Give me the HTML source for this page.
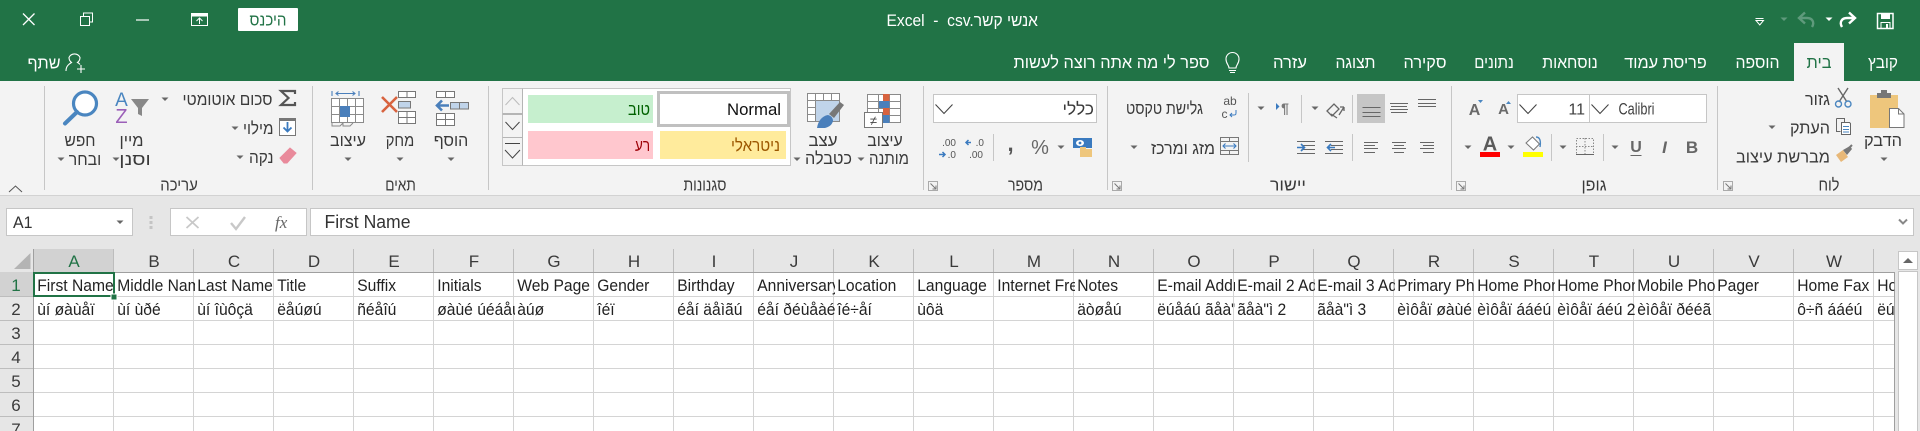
<!DOCTYPE html>
<html lang="he"><head><meta charset="utf-8"><title>Excel</title>
<style>
html,body{margin:0;padding:0;width:1920px;height:431px;overflow:hidden;background:#e6e6e6}
body{position:relative;font-family:"Liberation Sans",sans-serif}
svg{position:absolute;left:0;top:0}
text{font-family:"Liberation Sans",sans-serif;font-size:17px;fill:#3a3a3a;white-space:pre}
.w text,text.w{fill:#fff}
.m{text-anchor:middle}.e{text-anchor:end}
.c{position:absolute;width:84px;height:23px;overflow:hidden;white-space:nowrap;font-size:17px;line-height:23px;color:#222;padding-left:3.500px;transform-origin:0 0;transform:scaleX(.92)}
.r1{top:274px}.r2{top:298px}
</style></head><body>
<svg width="1920" height="431" viewBox="0 0 1920 431">
<defs>
<path id="t" d="M-3.500-1.500h7l-3.500 3.500z" fill="#666"/>
<path id="tw" d="M-3.500-1.500h7l-3.500 3.500z" fill="#fff"/>
<path id="ch" d="M-8.500-4.500L0 4.500 8.500-4.500" fill="none" stroke="#444" stroke-width="1.100"/>
<g id="la" fill="none" stroke="#777"><path d="M.5.5h9v9h-9z" stroke="#aaa"/><path d="M2.500 2.500l5 5M8 4.500v3.500H4.500"/></g>
</defs>
<!-- title bar -->
<rect width="1920" height="81" fill="#217346"/>
<rect x="1794" y="43" width="50" height="38" fill="#f3f3f3"/>
<path d="M23 13.500L34.500 25M34.500 13.500L23 25" stroke="#fff" stroke-width="1.300" fill="none"/>
<path d="M80.500 16.500h9v9h-9zM83.500 16v-3h9v9h-3" fill="none" stroke="#fff"/>
<path d="M136 20h13" stroke="#fff" stroke-width="1.200"/>
<path d="M191.500 13.500h16v12h-16z" fill="none" stroke="#fff"/><path d="M191 14h17v2.500h-17z" fill="#fff"/>
<path d="M199.500 24v-6M196.500 21l3-3 3 3" fill="none" stroke="#fff"/>
<rect x="238" y="8" width="60" height="23" rx="1" fill="#fff"/>
<text x="268" y="25.500" class="m" style="fill:#217346;font-size:16.500px" textLength="37" lengthAdjust="spacingAndGlyphs">היכנס</text>
<text x="886.500" y="26" class="w" style="font-size:16.500px" textLength="151.500" lengthAdjust="spacingAndGlyphs">Excel  -  csv.אנשי קשר</text>
<!-- QAT -->
<path d="M1877.500 13.500h15.500v15h-15.500z" fill="none" stroke="#fff" stroke-width="1.500"/><path d="M1881 13.500h9v5.500h-9z" fill="#fff"/><path d="M1881 22.500h9v6h-9z" fill="none" stroke="#fff"/><path d="M1886 24h2v4h-2z" fill="#fff"/>
<path d="M1842 27c-3-5 0-9 5-9h7M1849 12.500l6 5.500-6 5.500" fill="none" stroke="#fff" stroke-width="2.400"/>
<use href="#tw" x="1829" y="19"/>
<path d="M1812 27c3-5 0-9-5-9h-7M1805 12.500l-6 5.500 6 5.500" fill="none" stroke="#5f9a7c" stroke-width="2.400"/>
<path d="M1780.500 17.500h7l-3.500 3.500z" fill="#5f9a7c"/>
<path d="M1755.500 18.500h8M1756 20.500h7.500l-3.700 4.500z" fill="none" stroke="#fff"/>
<!-- tabs -->
<g class="w">
<text x="1883" y="68" class="m" textLength="30" lengthAdjust="spacingAndGlyphs">קובץ</text>
<text x="1757.500" y="68" class="m" textLength="44" lengthAdjust="spacingAndGlyphs">הוספה</text>
<text x="1665.500" y="68" class="m" textLength="82.500" lengthAdjust="spacingAndGlyphs">פריסת עמוד</text>
<text x="1570" y="68" class="m" textLength="55.500" lengthAdjust="spacingAndGlyphs">נוסחאות</text>
<text x="1494" y="68" class="m" textLength="39.500" lengthAdjust="spacingAndGlyphs">נתונים</text>
<text x="1425" y="68" class="m" textLength="43" lengthAdjust="spacingAndGlyphs">סקירה</text>
<text x="1355.500" y="68" class="m" textLength="40" lengthAdjust="spacingAndGlyphs">תצוגה</text>
<text x="1290" y="68" class="m" textLength="34" lengthAdjust="spacingAndGlyphs">עזרה</text>
<text x="1209.500" y="68" class="e" textLength="196" lengthAdjust="spacingAndGlyphs">ספר לי מה אתה רוצה לעשות</text>
<text x="60.500" y="68.500" class="e" textLength="33" lengthAdjust="spacingAndGlyphs">שתף</text>
</g>
<text x="1819" y="68" class="m" style="fill:#217346" textLength="25" lengthAdjust="spacingAndGlyphs">בית</text>
<path d="M1229 68c0-3-3-4-3-9a6.500 6.500 0 0 1 13 0c0 5-3 6-3 9zM1229 70.500h7M1230 72.500h5" fill="none" stroke="#fff" stroke-width="1.100"/>
<path d="M66 71c0-5 3-7 5.500-8.500-2-1.500-2.500-3-2.500-5a6 6 0 0 1 11 0c0 2-.5 3.500-2.500 5 1 .5 2 1.200 2.500 2M77 69h8M81 65v8" fill="none" stroke="#fff" stroke-width="1.100"/>
<!-- ribbon -->
<rect y="81" width="1920" height="114" fill="#f3f3f3"/>
<rect x="1794" y="79" width="50" height="3" fill="#f3f3f3"/>
<rect y="195" width="1920" height="1" fill="#d2d2d2"/>
<path d="M44.500 86v104M312.500 86v104M488.500 86v104M923.500 86v104M1107.500 86v104M1451.500 86v104M1717.500 86v104" stroke="#c6c6c6"/>
<path d="M1248.500 93v69M1301.500 95v28M1352.500 95v28M1352.500 134v27M1603.500 134v27M1551.500 134v27M993.500 134v27" stroke="#c6c6c6"/>
<path d="M9 192l6.500-6 6.500 6" fill="none" stroke="#555"/>
<!-- group labels -->
<g>
<text x="1829" y="190.500" class="m" textLength="21" lengthAdjust="spacingAndGlyphs">לוח</text><text x="1594" y="190.500" class="m" textLength="25" lengthAdjust="spacingAndGlyphs">גופן</text>
<text x="1288" y="190.500" class="m" textLength="36" lengthAdjust="spacingAndGlyphs">יישור</text><text x="1025.500" y="190.500" class="m" textLength="35" lengthAdjust="spacingAndGlyphs">מספר</text>
<text x="705" y="190.500" class="m" textLength="43" lengthAdjust="spacingAndGlyphs">סגנונות</text><text x="400.500" y="190.500" class="m" textLength="30.500" lengthAdjust="spacingAndGlyphs">תאים</text>
<text x="179" y="190.500" class="m" textLength="37.500" lengthAdjust="spacingAndGlyphs">עריכה</text>
</g>
<use href="#la" x="928" y="181"/><use href="#la" x="1112" y="181"/><use href="#la" x="1456" y="181"/><use href="#la" x="1723" y="181"/>
<!-- clipboard -->
<path d="M1870 95h28v33h-28z" fill="#eec67c"/><path d="M1877 93h14v5h-14z" fill="#777"/><path d="M1881 90h6v4h-6z" fill="#777"/>
<path d="M1889.500 108.500h9l5.500 5.500v13.500h-14.500z" fill="#fff" stroke="#777"/><path d="M1898.500 108.500v5.500h5.500" fill="none" stroke="#777"/>
<text x="1883" y="146" class="m" textLength="38" lengthAdjust="spacingAndGlyphs">הדבק</text><use href="#t" x="1884" y="159"/>
<text x="1830" y="105" class="e" textLength="25" lengthAdjust="spacingAndGlyphs">גזור</text>
<path d="M1838 88l9 14M1848 88l-9 14" stroke="#666" stroke-width="1.400"/><circle cx="1838.500" cy="104" r="3" fill="none" stroke="#4a86c0" stroke-width="1.400"/><circle cx="1848" cy="104" r="3" fill="none" stroke="#4a86c0" stroke-width="1.400"/>
<text x="1830" y="133.500" class="e" textLength="40" lengthAdjust="spacingAndGlyphs">העתק</text><use href="#t" x="1772" y="127"/>
<path d="M1836.500 118.500h8v4M1836.500 118.500v13h4" fill="none" stroke="#666"/><path d="M1841.500 122.500h8l1 1v11h-9z" fill="#fff" stroke="#666"/><path d="M1843 126.500h6M1843 129.500h6M1843 132h6" stroke="#4a86c0"/>
<text x="1830" y="162.500" class="e" textLength="94" lengthAdjust="spacingAndGlyphs">מברשת עיצוב</text>
<path d="M1836 155l7-5 5 7-7 5z" fill="#e8b878"/><path d="M1843 150l7-4 2 3-5 6z" fill="#777"/><path d="M1849 148l3-3" stroke="#777" stroke-width="2"/>
<!-- font -->
<rect x="1589.500" y="94.500" width="117" height="28" fill="#fff" stroke="#c6c6c6"/><rect x="1517.500" y="94.500" width="72" height="28" fill="#fff" stroke="#c6c6c6"/>
<use href="#ch" x="1600" y="109"/><use href="#ch" x="1528" y="109"/>
<text x="1618.500" y="114.500" textLength="36" lengthAdjust="spacingAndGlyphs" style="fill:#404040">Calibri</text><text x="1585" y="114.500" class="e" style="fill:#404040;font-size:16px">11</text>
<text x="1474.500" y="115" class="m" style="font-size:16px;font-weight:700;fill:#6a6a6a">A</text><path d="M1478 100h5l-2.500 3z" fill="#4a86c0"/>
<text x="1503.500" y="114" class="m" style="font-size:15px;font-weight:700;fill:#6a6a6a">A</text><path d="M1506 104h5l-2.500-3z" fill="#4a86c0"/>
<text x="1692" y="153" class="m" style="font-size:17px;font-weight:700;fill:#666">B</text>
<text x="1664.500" y="153" class="m" style="font-size:17px;font-weight:700;font-style:italic;fill:#666">I</text>
<text x="1636" y="152" class="m" style="font-size:16px;font-weight:700;fill:#666">U</text><path d="M1630.500 155.500h11" stroke="#666"/>
<use href="#t" x="1615" y="147"/><use href="#t" x="1563" y="147"/><use href="#t" x="1511" y="147"/><use href="#t" x="1468" y="147"/>
<path d="M1576.500 138.500h17v16h-17zM1585 138v17M1576 146.500h18" fill="none" stroke="#888" stroke-dasharray="1.500 1.500"/><path d="M1576 154.500h18" stroke="#666"/>
<path d="M1526 143l6.500-6 7 7-6 6z" fill="#fff" stroke="#777"/><path d="M1536 137c4 0 5 4 4 10" fill="none" stroke="#4a86c0" stroke-width="1.400"/><rect x="1523" y="152" width="20" height="5" fill="#ff0"/>
<text x="1490" y="150.500" class="m" style="font-size:20px;font-weight:700;fill:#5a5a5a">A</text><rect x="1480" y="152" width="20" height="5" fill="#f00"/>
<!-- alignment -->
<rect x="1357" y="94" width="28" height="29" fill="#c6c6c6"/>
<g stroke="#666" fill="none">
<path d="M1418 99.500h18M1418 103.500h18M1418 106.500h18"/>
<path d="M1390 103.500h18M1391 106.500h16M1390 109.500h18M1391 112.500h16"/>
<path d="M1362.500 107.500h18M1362.500 112.500h18M1362.500 116.500h18"/>
<path d="M1420 142.500h14M1423 145.500h11M1420 148.500h14M1423 152.500h11"/>
<path d="M1392 142.500h14M1394 145.500h10M1392 148.500h14M1394 152.500h10"/>
<path d="M1364 142.500h14M1364 145.500h11M1364 148.500h14M1364 152.500h11"/>
<path d="M1325 141.500h18M1331 145.500h12M1331 149.500h12M1325 153.500h18"/>
<path d="M1297 141.500h18M1303 145.500h12M1303 149.500h12M1297 153.500h18"/>
</g>
<path d="M1335 147.500h-7M1331 144l-3.500 3.500 3.500 3.500" fill="none" stroke="#3a7abf" stroke-width="1.600"/>
<path d="M1297 147.500h7M1301 144l3.500 3.500-3.500 3.500" fill="none" stroke="#3a7abf" stroke-width="1.600"/>
<path d="M1327 111l7-7 5 5-7 7zM1331 114l6 4M1339 115l5-8M1344 107h-4M1344 107v4" fill="none" stroke="#666" stroke-width="1.300"/>
<use href="#t" x="1315" y="108"/>
<path d="M1276 103v7l3.500-3.500z" fill="#3a7abf"/><text x="1285" y="113" class="m" style="font-size:14px;font-weight:700;fill:#777">¶</text>
<use href="#t" x="1261" y="108"/>
<text x="1230" y="105" class="m" style="font-size:12px;fill:#555">ab</text><text x="1224.500" y="118" class="m" style="font-size:12px;fill:#555">c</text><path d="M1236 110v3c0 2-1 2-2.500 2h-3M1232 113l-2 2 2 2" fill="none" stroke="#3a7abf"/>
<text x="1203" y="114" class="e" textLength="77" lengthAdjust="spacingAndGlyphs">גלישת טקסט</text>
<path d="M1220.500 137.500h18v17h-18zM1220.500 141.500h18M1220.500 150.500h18M1229.500 137.500v4M1229.500 150.500v4" fill="none" stroke="#777"/><path d="M1223 146h13M1225.500 143.500l-2.500 2.500 2.500 2.500M1233.500 143.500l2.500 2.500-2.500 2.500" fill="none" stroke="#3a7abf" stroke-width="1.100"/>
<text x="1215" y="154" class="e" textLength="64" lengthAdjust="spacingAndGlyphs">מזג ומרכז</text><use href="#t" x="1134" y="147"/>
<!-- number -->
<rect x="933.500" y="94.500" width="163" height="28" fill="#fff" stroke="#c6c6c6"/><use href="#ch" x="944" y="109"/>
<text x="1094" y="114.500" class="e" textLength="31.500" lengthAdjust="spacingAndGlyphs">כללי</text>
<rect x="1073" y="138" width="19" height="10" fill="#3a7abf"/><ellipse cx="1080" cy="143" rx="4" ry="3" fill="#fff"/><circle cx="1080" cy="143" r="1.400" fill="#3a7abf"/><path d="M1080 147h6v2h6v8h-12z" fill="#eec67c"/>
<use href="#t" x="1061" y="147"/>
<text x="1040" y="154" class="m" style="font-size:20px;fill:#666">%</text>
<text x="1010.500" y="151" class="m" style="font-size:22px;font-weight:700;fill:#555">,</text>
<text x="984" y="146" class="e" style="font-size:10px;fill:#555">.0</text><text x="983" y="158" class="e" style="font-size:10px;fill:#555">.00</text><path d="M971 142.500h-5M968.500 140l-2.500 2.500 2.500 2.500" fill="none" stroke="#3a7abf" stroke-width="1.500"/>
<text x="956" y="146" class="e" style="font-size:10px;fill:#555">.00</text><text x="956" y="158" class="e" style="font-size:10px;fill:#555">.0</text><path d="M939 154.500h6M942.500 152l2.500 2.500-2.500 2.500" fill="none" stroke="#3a7abf" stroke-width="1.500"/>
<!-- styles gallery -->
<rect x="502.500" y="88.500" width="288" height="77" fill="#fff" stroke="#c6c6c6"/>
<rect x="503" y="89" width="19" height="76" fill="#f3f3f3"/>
<path d="M502.500 113.500h20M502.500 114.500h20M502.500 137.500h20M522.500 88.500v77" stroke="#b5b5b5"/>
<path d="M505.500 105l7-7.500 7 7.500" fill="none" stroke="#bbb"/><path d="M505.500 122l7 7.500 7-7.500" fill="none" stroke="#444"/><path d="M505 143.500h15M505 150l7.500 8 7.500-8" fill="none" stroke="#444"/>
<rect x="528" y="95" width="125" height="28" fill="#c6efce"/><rect x="528" y="131" width="125" height="28" fill="#ffc7ce"/>
<rect x="660" y="131" width="126" height="28" fill="#ffeb9c"/>
<rect x="658.500" y="92.500" width="130" height="33" fill="#fff" stroke="#c0c0c0" stroke-width="3"/>
<text x="650" y="115" class="e" style="fill:#006100" textLength="22" lengthAdjust="spacingAndGlyphs">טוב</text><text x="650" y="151" class="e" style="fill:#9c0006" textLength="15" lengthAdjust="spacingAndGlyphs">רע</text>
<text x="781" y="115" class="e" style="fill:#111" textLength="54" lengthAdjust="spacingAndGlyphs">Normal</text><text x="780" y="151" class="e" style="fill:#9c5700" textLength="49" lengthAdjust="spacingAndGlyphs">ניטראלי</text>
<!-- cond format icon -->
<path d="M867.500 94.500h33v28h-33zM867.500 101.500h33M867.500 108.500h33M867.500 115.500h33M878.500 94.500v28M889.500 94.500v28" fill="#fff" stroke="#8a8a8a"/>
<rect x="883" y="94" width="6.500" height="7" fill="#d8633f"/><rect x="879" y="101" width="10.500" height="7" fill="#4a7fbb"/><rect x="883" y="108" width="6.500" height="7" fill="#d8633f"/><rect x="883" y="115" width="6.500" height="8" fill="#4a7fbb"/>
<rect x="864.500" y="112.500" width="18" height="15" fill="#fff" stroke="#777"/><text x="873.500" y="125" class="m" style="font-size:13px;fill:#444">≠</text>
<text x="885" y="146" class="m" textLength="35.500" lengthAdjust="spacingAndGlyphs">עיצוב</text><text x="889" y="164" class="m" textLength="40" lengthAdjust="spacingAndGlyphs">מותנה</text><use href="#t" x="861" y="159"/>
<!-- format table icon -->
<path d="M807.500 93.500h32v28h-32zM807.500 100.500h32M807.500 107.500h32M807.500 114.500h32M815.500 93.500v28M823.500 93.500v28M831.500 93.500v28" fill="#fff" stroke="#8a8a8a"/><rect x="816" y="101" width="23" height="20" fill="#c0d4ea"/>
<path d="M829 114l11-12 4 3-10 13z" fill="#777"/><path d="M817 128c1-7 5-12 11-13 4 1 5 4 5 6-1 4-4 6-8 7z" fill="#4a7fbb"/>
<text x="823" y="146" class="m" textLength="29" lengthAdjust="spacingAndGlyphs">עצב</text><text x="828.500" y="164" class="m" textLength="47" lengthAdjust="spacingAndGlyphs">כטבלה</text><use href="#t" x="797" y="159"/>
<!-- cells group -->
<path d="M436.500 91.500h18v6h-18zM445.500 91.500v6M436.500 113.500h18v12h-18zM436.500 119.500h18M445.500 113.500v12" fill="#fff" stroke="#777"/>
<rect x="450.500" y="102.500" width="18" height="6.500" fill="#c0d4ea" stroke="#777"/><path d="M459.500 102.500v6.500" stroke="#777"/>
<path d="M449 105.500h-12M442 100.500l-5 5 5 5" fill="none" stroke="#4a7fbb" stroke-width="2.600"/>
<text x="451" y="146" class="m" textLength="34.500" lengthAdjust="spacingAndGlyphs">הוסף</text><use href="#t" x="451" y="159"/>
<path d="M398.500 91.500h17v6h-17zM407 91.500v6M398.500 111.500h17v12h-17zM398.500 117.500h17M407 111.500v12" fill="#fff" stroke="#777"/>
<rect x="398.500" y="101.500" width="12" height="6.500" fill="#c0d4ea" stroke="#777"/>
<path d="M382 97l15 15M397 97l-15 15" stroke="#d8633f" stroke-width="2.600"/>
<text x="400" y="146" class="m" textLength="28.500" lengthAdjust="spacingAndGlyphs">מחק</text><use href="#t" x="400" y="159"/>
<path d="M331.500 98.500h32v24h-32zM331.500 106.500h32M331.500 114.500h32M339.500 98.500v24M347.500 98.500v24M355.500 98.500v24" fill="#fff" stroke="#8a8a8a"/>
<rect x="340" y="106" width="10" height="11" fill="#4a7fbb"/><path d="M332 91v5M359 91v5M336 93.500h19M338.500 91.500l-2.500 2 2.500 2M352.500 91.500l2.500 2-2.500 2" fill="none" stroke="#4a7fbb" stroke-width="1.100"/>
<path d="M332 123v3h8l3-3M343 123v3h7l3-3" fill="none" stroke="#888"/>
<text x="348" y="146" class="m" textLength="36" lengthAdjust="spacingAndGlyphs">עיצוב</text><use href="#t" x="348" y="159"/>
<!-- editing -->
<path d="M295 94v-3H281l7.500 7-7.500 7h14v-3" fill="none" stroke="#555" stroke-width="2.200"/>
<text x="272.500" y="105" class="e" textLength="90" lengthAdjust="spacingAndGlyphs">סכום אוטומטי</text><use href="#t" x="165" y="99"/>
<rect x="279.500" y="118.500" width="16" height="17" fill="#fff" stroke="#777"/><path d="M279.500 119h16v2h-16z" fill="#777"/><path d="M287.500 122v9M283.500 127.500l4 4 4-4" fill="none" stroke="#3a7abf" stroke-width="1.800"/>
<text x="273.500" y="134" class="e" textLength="30.500" lengthAdjust="spacingAndGlyphs">מילוי</text><use href="#t" x="235" y="128"/>
<path d="M280 158l10-10 6 5-9 10h-3z" fill="#e98a9b" stroke="#e98a9b"/>
<text x="273.500" y="163" class="e" textLength="24.500" lengthAdjust="spacingAndGlyphs">נקה</text><use href="#t" x="240" y="157"/>
<text x="121.500" y="106" class="m" style="font-size:19px;fill:#4a86c0">A</text><text x="121.500" y="123" class="m" style="font-size:20px;fill:#9b5fb8">Z</text>
<path d="M131 99h18l-7 9v8l-4-2v-6z" fill="#888"/>
<text x="131.500" y="146" class="m" textLength="24" lengthAdjust="spacingAndGlyphs">מיין</text><text x="135" y="165" class="m" textLength="31.500" lengthAdjust="spacingAndGlyphs">וסנן</text><use href="#t" x="116" y="159"/>
<circle cx="85" cy="103.500" r="11.500" fill="#fff" stroke="#4a86c0" stroke-width="3.200"/><path d="M77 112L65 123.500" stroke="#4a86c0" stroke-width="4" stroke-linecap="round"/>
<text x="80" y="146" class="m" textLength="31" lengthAdjust="spacingAndGlyphs">חפש</text><text x="85" y="165" class="m" textLength="32.500" lengthAdjust="spacingAndGlyphs">ובחר</text><use href="#t" x="61" y="159"/>
<!-- formula bar -->
<rect x="6.500" y="208.500" width="126" height="27" fill="#fff" stroke="#c6c6c6"/><text x="13" y="228" style="font-size:16.500px;fill:#333" textLength="19.500" lengthAdjust="spacingAndGlyphs">A1</text><use href="#t" x="120" y="222"/>
<path d="M149.500 216h3v3h-3zM149.500 221h3v3h-3zM149.500 226h3v3h-3z" fill="#c4c4c4"/>
<rect x="170.500" y="208.500" width="136" height="27" fill="#fff" stroke="#c6c6c6"/>
<path d="M186.500 217l12 11M198.500 217l-12 11" stroke="#c8c8c8" stroke-width="1.800"/>
<path d="M231 223l5 6 9-12" fill="none" stroke="#c8c8c8" stroke-width="2.400"/>
<text x="275" y="228" style="font:italic 400 17px 'Liberation Serif',serif;fill:#666">fx</text>
<rect x="310.500" y="208.500" width="1603" height="27" fill="#fff" stroke="#c6c6c6"/>
<text x="324.500" y="228" style="font-size:18px;fill:#333" textLength="86" lengthAdjust="spacingAndGlyphs">First Name</text>
<path d="M1899 219.500l4 4 4-4" fill="none" stroke="#888" stroke-width="2"/>
<!-- grid -->
<rect x="33" y="272" width="1861" height="159" fill="#fff"/>
<rect y="249" width="33" height="182" fill="#e6e6e6"/>
<rect x="33" y="249" width="80" height="23" fill="#d2d2d2"/><rect y="272" width="33" height="24" fill="#d2d2d2"/>
<path d="M30.500 253v16H14z" fill="#b4b4b4"/>
<path d="M113.500 272V431M193.500 272V431M273.500 272V431M353.500 272V431M433.500 272V431M513.500 272V431M593.500 272V431M673.500 272V431M753.500 272V431M833.500 272V431M913.500 272V431M993.500 272V431M1073.500 272V431M1153.500 272V431M1233.500 272V431M1313.500 272V431M1393.500 272V431M1473.500 272V431M1553.500 272V431M1633.500 272V431M1713.500 272V431M1793.500 272V431M1873.500 272V431M33 296.500H1894M33 320.500H1894M33 344.500H1894M33 368.500H1894M33 392.500H1894M33 416.500H1894" stroke="#d4d4d4"/>
<path d="M113.500 249V272M193.500 249V272M273.500 249V272M353.500 249V272M433.500 249V272M513.500 249V272M593.500 249V272M673.500 249V272M753.500 249V272M833.500 249V272M913.500 249V272M993.500 249V272M1073.500 249V272M1153.500 249V272M1233.500 249V272M1313.500 249V272M1393.500 249V272M1473.500 249V272M1553.500 249V272M1633.500 249V272M1713.500 249V272M1793.500 249V272M1873.500 249V272M0 296.500H33M0 320.500H33M0 344.500H33M0 368.500H33M0 392.500H33M0 416.500H33" stroke="#bdbdbd"/>
<path d="M33.500 249V431M33 272.500H1894M1894.500 272V431" stroke="#9f9f9f"/>
<g>
<text x="74" y="267" class="m" style="fill:#217346">A</text><text x="154" y="267" class="m">B</text><text x="234" y="267" class="m">C</text><text x="314" y="267" class="m">D</text><text x="394" y="267" class="m">E</text><text x="474" y="267" class="m">F</text><text x="554" y="267" class="m">G</text><text x="634" y="267" class="m">H</text><text x="714" y="267" class="m">I</text><text x="794" y="267" class="m">J</text><text x="874" y="267" class="m">K</text><text x="954" y="267" class="m">L</text><text x="1034" y="267" class="m">M</text><text x="1114" y="267" class="m">N</text><text x="1194" y="267" class="m">O</text><text x="1274" y="267" class="m">P</text><text x="1354" y="267" class="m">Q</text><text x="1434" y="267" class="m">R</text><text x="1514" y="267" class="m">S</text><text x="1594" y="267" class="m">T</text><text x="1674" y="267" class="m">U</text><text x="1754" y="267" class="m">V</text><text x="1834" y="267" class="m">W</text>
<text x="16" y="291" class="m" style="fill:#217346">1</text><text x="16" y="315" class="m">2</text><text x="16" y="339" class="m">3</text><text x="16" y="363" class="m">4</text><text x="16" y="387" class="m">5</text><text x="16" y="411" class="m">6</text><text x="16" y="435" class="m">7</text>
</g>
<!-- scrollbar -->
<rect x="1898.500" y="251.500" width="19" height="18" fill="#fff" stroke="#c6c6c6"/><path d="M1903 263l5-5 5 5z" fill="#666"/>
<rect x="1898.500" y="271.500" width="19" height="170" fill="#fff" stroke="#c6c6c6"/>
</svg>
<div class="c r1" style="left:34px">First Name</div><div class="c r1" style="left:114px">Middle Name</div><div class="c r1" style="left:194px">Last Name</div><div class="c r1" style="left:274px">Title</div><div class="c r1" style="left:354px">Suffix</div><div class="c r1" style="left:434px">Initials</div><div class="c r1" style="left:514px">Web Page</div><div class="c r1" style="left:594px">Gender</div><div class="c r1" style="left:674px">Birthday</div><div class="c r1" style="left:754px">Anniversary</div><div class="c r1" style="left:834px">Location</div><div class="c r1" style="left:914px">Language</div><div class="c r1" style="left:994px">Internet Free Busy</div><div class="c r1" style="left:1074px">Notes</div><div class="c r1" style="left:1154px">E-mail Address</div><div class="c r1" style="left:1234px">E-mail 2 Address</div><div class="c r1" style="left:1314px">E-mail 3 Address</div><div class="c r1" style="left:1394px">Primary Phone</div><div class="c r1" style="left:1474px">Home Phone</div><div class="c r1" style="left:1554px">Home Phone 2</div><div class="c r1" style="left:1634px">Mobile Phone</div><div class="c r1" style="left:1714px">Pager</div><div class="c r1" style="left:1794px">Home Fax</div><div class="c r1" style="left:1874px;width:18px">Home Address</div>
<div class="c r2" style="left:34px">ùí øàùåï</div><div class="c r2" style="left:114px">ùí ùðé</div><div class="c r2" style="left:194px">ùí îùôçä</div><div class="c r2" style="left:274px">ëåúøú</div><div class="c r2" style="left:354px">ñéåîú</div><div class="c r2" style="left:434px">øàùé úéáåú</div><div class="c r2" style="left:514px">àúø</div><div class="c r2" style="left:594px">îéï</div><div class="c r2" style="left:674px">éåí äåìãú</div><div class="c r2" style="left:754px">éåí ðéùåàéï</div><div class="c r2" style="left:834px">îé÷åí</div><div class="c r2" style="left:914px">ùôä</div><div class="c r2" style="left:1074px">äòøåú</div><div class="c r2" style="left:1154px">ëúåáú ãåà"ì</div><div class="c r2" style="left:1234px">ãåà"ì 2</div><div class="c r2" style="left:1314px">ãåà"ì 3</div><div class="c r2" style="left:1394px">èìôåï øàùé</div><div class="c r2" style="left:1474px">èìôåï ááéú</div><div class="c r2" style="left:1554px">èìôåï áéú 2</div><div class="c r2" style="left:1634px">èìôåï ðééã</div><div class="c r2" style="left:1794px">ô÷ñ ááéú</div><div class="c r2" style="left:1874px;width:18px">ëúåáú</div>
<svg width="1920" height="431" viewBox="0 0 1920 431" style="pointer-events:none">
<rect x="34" y="273" width="80" height="23" fill="none" stroke="#217346" stroke-width="2"/>
<rect x="111" y="294" width="6" height="6" fill="#217346" stroke="#fff"/>
</svg>
</body></html>
